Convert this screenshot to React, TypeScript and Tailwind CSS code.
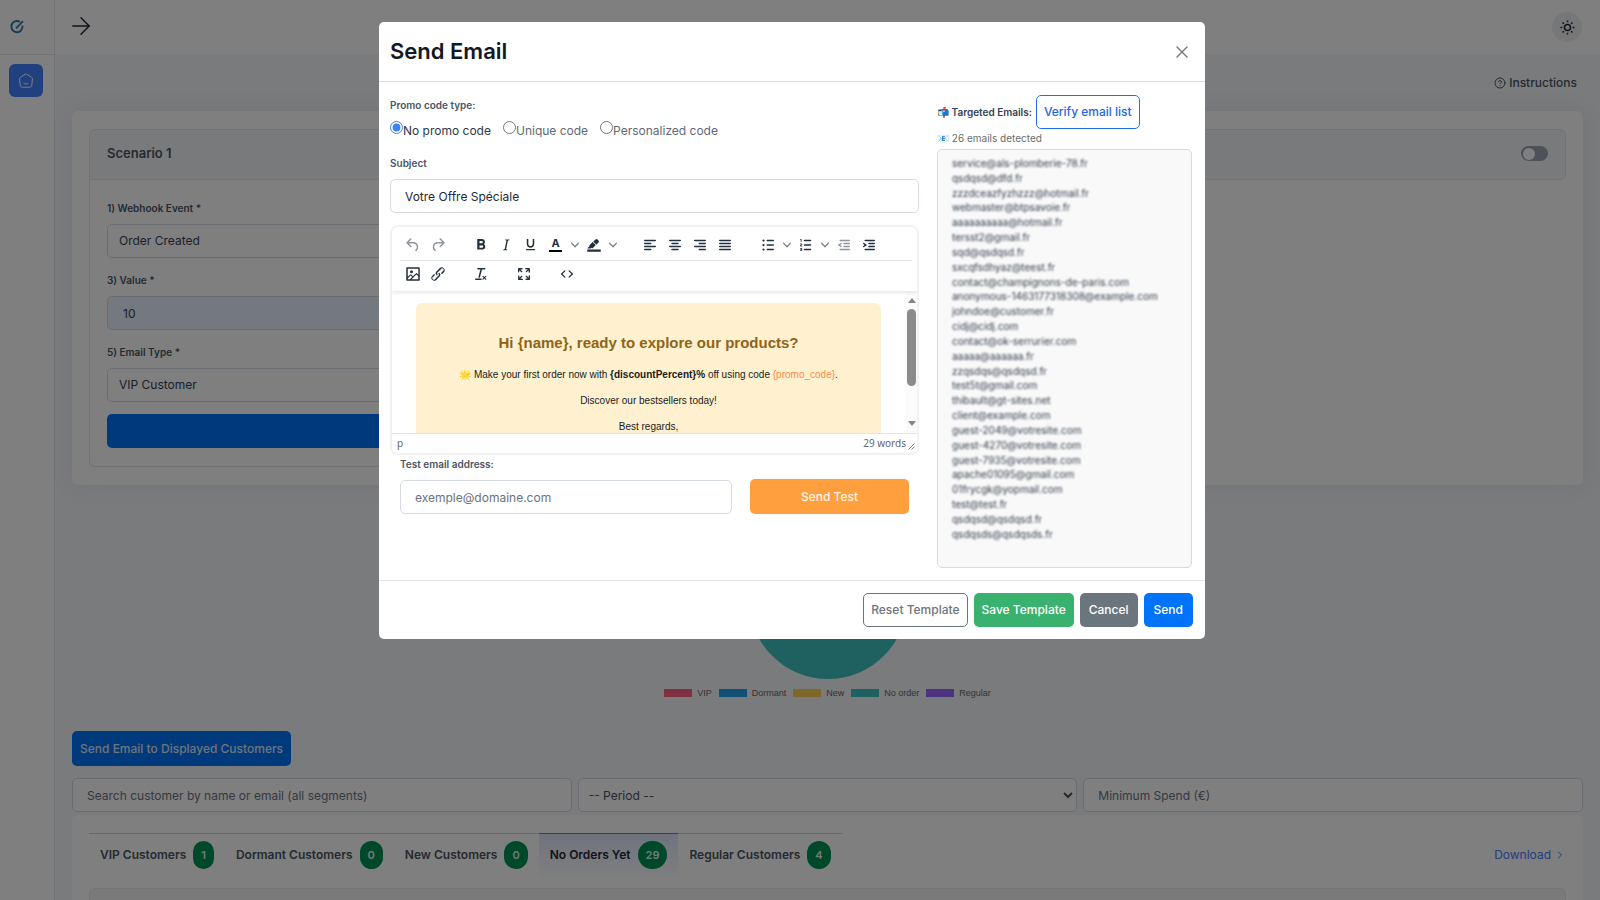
import { useState } from "react";
import type { ReactNode } from "react";
import { ArrowRight, CircleHelp, ChevronRight } from "lucide-react";
import { MdFormatBold, MdFormatUnderlined } from "react-icons/md";

const emails = [
  "service@als-plomberie-78.fr",
  "qsdqsd@dfd.fr",
  "zzzdceazfyzhzzz@hotmail.fr",
  "webmaster@btpsavoie.fr",
  "aaaaaaaaaa@hotmail.fr",
  "tersst2@gmail.fr",
  "sqd@qsdqsd.fr",
  "sxcqfsdhyaz@teest.fr",
  "contact@champignons-de-paris.com",
  "anonymous-1463177318308@example.com",
  "johndoe@customer.fr",
  "cidj@cidj.com",
  "contact@ok-serrurier.com",
  "aaaaa@aaaaaa.fr",
  "zzqsdqs@qsdqsd.fr",
  "test5t@gmail.com",
  "thibault@gt-sites.net",
  "client@example.com",
  "guest-2049@votresite.com",
  "guest-4270@votresite.com",
  "guest-7935@votresite.com",
  "apache01095@gmail.com",
  "01frycgk@yopmail.com",
  "test@test.fr",
  "qsdqsd@qsdqsd.fr",
  "qsdqsds@qsdqsds.fr",
];

const legend = [
  { label: "VIP", color: "bg-[#ff6384]" },
  { label: "Dormant", color: "bg-[#22a0e8]" },
  { label: "New", color: "bg-[#ffcd56]" },
  { label: "No order", color: "bg-[#3cc3c0]" },
  { label: "Regular", color: "bg-[#9966ff]" },
];

const tabs = [
  { label: "VIP Customers", count: 1 },
  { label: "Dormant Customers", count: 0 },
  { label: "New Customers", count: 0 },
  { label: "No Orders Yet", count: 29 },
  { label: "Regular Customers", count: 4 },
];

const promoTypes = ["No promo code", "Unique code", "Personalized code"];

const icons = {
  undo: "M6.4 8H12c3.7 0 6.2 2 6.8 5.1.6 2.7-.4 5.6-2.3 6.8a1 1 0 0 1-1-1.8c1.1-.6 1.8-2.7 1.4-4.6-.5-2.1-2.1-3.5-4.9-3.5H6.4l3.3 3.3a1 1 0 1 1-1.4 1.4l-5-5a1 1 0 0 1 0-1.4l5-5a1 1 0 0 1 1.4 1.4L6.4 8Z",
  redo: "M17.6 10H12c-2.8 0-4.4 1.4-4.9 3.5-.4 2 .3 4 1.4 4.6a1 1 0 1 1-1 1.8c-2-1.2-2.9-4.1-2.3-6.8.6-3 3-5.1 6.8-5.1h5.6l-3.3-3.3a1 1 0 1 1 1.4-1.4l5 5a1 1 0 0 1 0 1.4l-5 5a1 1 0 0 1-1.4-1.4l3.3-3.3Z",
  italic: "m16.7 4.7-.1.9h-.3c-.6 0-1 0-1.4.3-.3.3-.4.6-.5 1.1l-2.1 9.8v.6c0 .5.4.8 1.4.8h.2l-.2.8H8l.2-.8h.2c1.1 0 1.8-.5 2-1.5l2-9.8.1-.5c0-.6-.4-.8-1.4-.8h-.3l.2-.9h5.8Z",
  marker: "M3 18h18v3H3zM7.7 16.7H3l3.3-3.3-.7-.8L10.2 8l4 4.1-4 4.2c-.2.2-.6.2-.8 0l-.6-.7-1.1 1.1zm5-7.5L11 7.4l3-2.9a2 2 0 0 1 2.6 0L18 6c.7.7.7 2 0 2.7l-2.9 2.9-1.8-1.8-.5-.6",
  left: "M5 5h14a1 1 0 0 1 0 2H5a1 1 0 0 1 0-2Zm0 4h8a1 1 0 0 1 0 2H5a1 1 0 0 1 0-2Zm0 8h8a1 1 0 0 1 0 2H5a1 1 0 0 1 0-2Zm0-4h14a1 1 0 0 1 0 2H5a1 1 0 0 1 0-2Z",
  center: "M5 5h14a1 1 0 0 1 0 2H5a1 1 0 0 1 0-2Zm3 4h8a1 1 0 0 1 0 2H8a1 1 0 0 1 0-2Zm0 8h8a1 1 0 0 1 0 2H8a1 1 0 0 1 0-2Zm-3-4h14a1 1 0 0 1 0 2H5a1 1 0 0 1 0-2Z",
  right: "M5 5h14a1 1 0 0 1 0 2H5a1 1 0 0 1 0-2Zm6 4h8a1 1 0 0 1 0 2h-8a1 1 0 0 1 0-2Zm0 8h8a1 1 0 0 1 0 2h-8a1 1 0 0 1 0-2Zm-6-4h14a1 1 0 0 1 0 2H5a1 1 0 0 1 0-2Z",
  justify: "M5 5h14a1 1 0 0 1 0 2H5a1 1 0 0 1 0-2Zm0 4h14a1 1 0 0 1 0 2H5a1 1 0 0 1 0-2Zm0 4h14a1 1 0 0 1 0 2H5a1 1 0 0 1 0-2Zm0 4h14a1 1 0 0 1 0 2H5a1 1 0 0 1 0-2Z",
  bullets: "M11 5h8a1 1 0 0 1 0 2h-8a1 1 0 0 1 0-2Zm0 6h8a1 1 0 0 1 0 2h-8a1 1 0 0 1 0-2Zm0 6h8a1 1 0 0 1 0 2h-8a1 1 0 0 1 0-2ZM4.5 6a1.5 1.5 0 1 1 3 0 1.5 1.5 0 0 1-3 0Zm0 6a1.5 1.5 0 1 1 3 0 1.5 1.5 0 0 1-3 0Zm0 6a1.5 1.5 0 1 1 3 0 1.5 1.5 0 0 1-3 0Z",
  numbers: "M10 17h8a1 1 0 0 1 0 2h-8a1 1 0 0 1 0-2Zm0-6h8a1 1 0 0 1 0 2h-8a1 1 0 0 1 0-2Zm0-6h8a1 1 0 1 1 0 2h-8a1 1 0 1 1 0-2ZM6 4v3.5c0 .3-.2.5-.5.5a.5.5 0 0 1-.5-.5V5h-.5a.5.5 0 0 1 0-1H6Zm-1 8.8.2.2h1.3c.3 0 .5.2.5.5s-.2.5-.5.5H4.9a1 1 0 0 1-.9-1V13c0-.4.3-.8.6-1l1.2-.4.2-.3a.2.2 0 0 0-.2-.2H4.5a.5.5 0 0 1-.5-.5c0-.3.2-.5.5-.5h1.6c.5 0 .9.4.9 1v.1c0 .4-.3.8-.6 1l-1.2.4-.2.3ZM7 17v2c0 .6-.4 1-1 1H4.5a.5.5 0 0 1 0-1h1.2c.2 0 .3-.1.3-.3 0-.2-.1-.3-.3-.3H4.4a.4.4 0 1 1 0-.8h1.3c.2 0 .3-.1.3-.3 0-.2-.1-.3-.3-.3H4.5a.5.5 0 1 1 0-1H6c.6 0 1 .4 1 1Z",
  outdent: "M7 5h12a1 1 0 0 1 0 2H7a1 1 0 1 1 0-2Zm5 4h7a1 1 0 0 1 0 2h-7a1 1 0 0 1 0-2Zm0 4h7a1 1 0 0 1 0 2h-7a1 1 0 0 1 0-2Zm-5 4h12a1 1 0 0 1 0 2H7a1 1 0 0 1 0-2Zm1.6-3.8a1 1 0 0 1-1.2 1.6l-3-2a1 1 0 0 1 0-1.6l3-2a1 1 0 0 1 1.2 1.6L6.8 12l1.8 1.2Z",
  indent: "M7 5h12a1 1 0 0 1 0 2H7a1 1 0 1 1 0-2Zm5 4h7a1 1 0 0 1 0 2h-7a1 1 0 0 1 0-2Zm0 4h7a1 1 0 0 1 0 2h-7a1 1 0 0 1 0-2Zm-5 4h12a1 1 0 0 1 0 2H7a1 1 0 0 1 0-2Zm-2.600-3.800L6.200 12l-1.800-1.200a1 1 0 0 1 1.200-1.600l3 2a1 1 0 0 1 0 1.600l-3 2a1 1 0 1 1-1.200-1.600Z",
  image: "m5 15.7 3.3-3.2c.3-.3.7-.3 1 0L12 15l4.1-4c.3-.4.8-.4 1 0l2 1.9V5H5v10.7ZM5 18V19h3l2.8-2.9-2-2L5 17.9Zm14-3-2.5-2.4-6.4 6.5H19v-4ZM4 3h16c.6 0 1 .4 1 1v16c0 .6-.4 1-1 1H4a1 1 0 0 1-1-1V4c0-.6.4-1 1-1Zm6 8a2 2 0 1 0 0-4 2 2 0 0 0 0 4Z",
  link: "M6.2 12.3a1 1 0 0 1 1.4 1.4l-2 2a2 2 0 1 0 2.6 2.8l4.8-4.8a1 1 0 0 0 0-1.4 1 1 0 1 1 1.4-1.3 2.9 2.9 0 0 1 0 4L9.6 20a3.9 3.9 0 0 1-5.5-5.5l2-2Zm11.6-.6a1 1 0 0 1-1.4-1.4l2-2a2 2 0 1 0-2.6-2.8L11 10.3a1 1 0 0 0 0 1.4A1 1 0 1 1 9.6 13a2.9 2.9 0 0 1 0-4L14.4 4a3.9 3.9 0 0 1 5.5 5.5l-2 2Z",
  clear: "M13.2 6a1 1 0 0 1 0 .2l-2.6 10a1 1 0 0 1-1 .8h-.2a.8.8 0 0 1-.8-1l2.6-10H8a1 1 0 1 1 0-2h9a1 1 0 0 1 0 2h-3.8ZM5 18h7a1 1 0 0 1 0 2H5a1 1 0 0 1 0-2Zm13 1.5L16.5 18 15 19.5a.7.7 0 0 1-1-1l1.5-1.5-1.5-1.5a.7.7 0 0 1 1-1l1.5 1.5 1.5-1.5a.7.7 0 0 1 1 1L17.5 17l1.5 1.5a.7.7 0 0 1-1 1Z",
  fullscreen: "m15.3 10-1.2-1.3 2.9-3h-2.3a.9.9 0 1 1 0-1.7H19c.5 0 .9.4.9.9v4.4a.9.9 0 1 1-1.8 0V7l-2.9 3Zm0 4 3 3v-2.3a.9.9 0 1 1 1.7 0V19c0 .5-.4.9-.9.9h-4.4a.9.9 0 1 1 0-1.8H17l-3-2.9 1.3-1.2ZM10 15.4l-2.9 3h2.3a.9.9 0 1 1 0 1.7H5a.9.9 0 0 1-.9-.9v-4.4a.9.9 0 1 1 1.8 0V17l2.9-3 1.2 1.3ZM8.7 10 5.7 7v2.3a.9.9 0 0 1-1.7 0V5c0-.5.4-.9.9-.9h4.4a.9.9 0 0 1 0 1.8H7l3 2.9-1.3 1.2Z",
  code: "M9.8 15.7c.3.3.3.8 0 1-.3.4-.9.4-1.2 0l-4.4-4.1a.8.8 0 0 1 0-1.2l4.4-4.2c.3-.3.9-.3 1.2 0 .3.3.3.8 0 1.1L6 12l3.8 3.7ZM14.2 15.7c-.3.3-.3.8 0 1 .4.4.9.4 1.2 0l4.4-4.1c.3-.3.3-.8 0-1.2l-4.4-4.2a.8.8 0 0 0-1.2 0c-.3.3-.3.8 0 1.1L18 12l-3.8 3.7Z",
};

type IconName = keyof typeof icons;

function Icon({ name }: { name: IconName }) {
  return (
    <svg viewBox="0 0 24 24" className="h-[18px] w-[18px]" fill="currentColor" fillRule="evenodd">
      <path d={icons[name]} />
    </svg>
  );
}

function Tool({ label, disabled, children }: { label: string; disabled?: boolean; children: ReactNode }) {
  return (
    <button
      type="button"
      aria-label={label}
      disabled={disabled}
      className="flex h-6 w-[25px] items-center justify-center text-[#222f3e] disabled:opacity-50"
    >
      {children}
    </button>
  );
}

function Caret({ label }: { label: string }) {
  return (
    <button type="button" aria-label={label} className="flex h-6 w-[13px] items-center justify-center text-[#222f3e]/60">
      <svg viewBox="0 0 10 10" className="h-2 w-2" fill="currentColor">
        <path d="M8.7 2.2c.3-.3.8-.3 1 0 .4.4.4.9 0 1.2L5.7 7.8c-.3.3-.9.3-1.2 0L.2 3.4a.8.8 0 0 1 0-1.2c.3-.3.8-.3 1.1 0L5 6l3.7-3.8Z" />
      </svg>
    </button>
  );
}

function Sidebar() {
  return (
    <aside className="w-[55px] shrink-0 border-r border-[#e6e9ee] bg-white">
      <div className="flex h-[55px] items-center border-b border-[#e3e6ea] pl-[9px]">
        <svg viewBox="0 0 16 16" className="h-4 w-4" fill="none" stroke="#2d7aa6" strokeWidth="2">
          <path d="M10.8 2.8A5.6 5.6 0 1 0 13.4 6.6" />
          <path d="M7 9.4 14 2.2" strokeWidth="1.8" />
        </svg>
      </div>
      <nav className="pt-[9px] pl-[9px]">
        <a href="#home" aria-label="Home" className="flex h-[33px] w-[34px] items-center justify-center rounded-md bg-[#4180ff] text-white">
          <svg viewBox="0 0 16 16" className="h-4 w-4" fill="none" stroke="currentColor" strokeWidth="1" strokeLinecap="round">
            <path d="M6.7 1.5 2.6 4.2c-.7.5-1 1-1 1.8l.6 6.2c.1 1.3.9 2 2.2 2h7.2c1.3 0 2.1-.7 2.2-2l.6-6.2c0-.8-.3-1.3-1-1.8L9.3 1.5c-.8-.5-1.8-.5-2.6 0Z" />
            <path d="M6 10.5c1.2.7 2.8.7 4 0" />
          </svg>
        </a>
      </nav>
    </aside>
  );
}

function Topbar() {
  return (
    <header className="flex h-[54px] shrink-0 items-center justify-between bg-white pr-[18px] pl-3">
      <button type="button" aria-label="Toggle menu" className="pb-[2px] text-[#1f2937]">
        <ArrowRight className="h-7 w-7" strokeWidth={1.3} />
      </button>
      <button type="button" aria-label="Theme" className="flex h-[30px] w-[30px] items-center justify-center rounded-full bg-[#eceef1] text-[#1f2937]">
        <svg viewBox="0 0 16 16" className="h-[15px] w-[15px]" fill="none" stroke="currentColor" strokeWidth="1.6">
          <circle cx="8" cy="8" r="3.2" />
          <path d="M8 .5v2M8 13.5v2M.5 8h2M13.5 8h2M2.7 2.7l1.4 1.4M11.9 11.9l1.4 1.4M2.7 13.3l1.4-1.4M11.9 4.1l1.4-1.4" />
        </svg>
      </button>
    </header>
  );
}

function Scenario() {
  return (
    <section className="mt-[18px] rounded-md bg-white px-[17px] py-[18px] shadow-[0_0_24px_rgba(80,70,110,0.08)]">
      <div className="flex h-[51px] items-center justify-between rounded-t-md rounded-br-md border border-[#e2e6eb] bg-[#f1f4f7] px-[17px] pb-[2px]">
        <h2 className="text-[13px] font-semibold text-[#4b5563]">Scenario 1</h2>
        <label className="flex">
          <input type="checkbox" aria-label="Enable scenario 1" className="peer sr-only" />
          <span className="flex h-[15px] w-[27px] items-center rounded-full bg-[#9ea3b4] px-[2px]">
            <span className="h-3 w-3 rounded-full bg-white" />
          </span>
        </label>
      </div>
      <div className="w-1/2 rounded-b-md border border-t-0 border-[#e2e6eb] px-[17px] pt-5 pb-[18px]">
        <label htmlFor="event" className="mb-2 block text-[10px] leading-4 font-semibold text-[#4b5563]">1) Webhook Event *</label>
        <select id="event" className="mb-[14px] h-[34px] w-full appearance-none rounded-[5px] border border-[#d3d7e0] bg-white px-[11px] text-[12px] text-[#374151]">
          <option>Order Created</option>
        </select>
        <label htmlFor="value" className="mb-2 block text-[10px] leading-4 font-semibold text-[#4b5563]">3) Value *</label>
        <input id="value" defaultValue="10" className="mb-[14px] h-[34px] w-full rounded-[5px] border border-[#d3d7e0] bg-[#e8f0fe] px-[15px] text-[12px] text-[#374151]" />
        <label htmlFor="type" className="mb-2 block text-[10px] leading-4 font-semibold text-[#4b5563]">5) Email Type *</label>
        <select id="type" className="mb-3 h-[34px] w-full appearance-none rounded-[5px] border border-[#d3d7e0] bg-white px-[11px] text-[12px] text-[#374151]">
          <option>VIP Customer</option>
        </select>
        <button type="button" aria-label="Save scenario" className="block h-[34px] w-full rounded-[5px] bg-[#0073f9]" />
      </div>
    </section>
  );
}

function Chart() {
  return (
    <section className="flex flex-col items-center pt-9">
      <svg viewBox="0 0 158 158" className="h-[158px] w-[158px]">
        <circle cx="79" cy="79" r="79" fill="#3cc3c0" />
      </svg>
      <ul className="mt-2 flex gap-[7px] font-['Liberation_Sans',sans-serif] text-[9px] leading-3 text-[#666666]">
        {legend.map((item) => (
          <li key={item.label} className="flex items-center gap-[5px]">
            <span className={`h-2 w-7 ${item.color}`} />
            {item.label}
          </li>
        ))}
      </ul>
    </section>
  );
}

function Customers() {
  return (
    <>
      <button type="button" className="mt-8 h-[35px] self-start rounded-[5px] bg-[#0073f9] px-2 text-[12px] font-medium text-[#dfe8f6]">
        Send Email to Displayed Customers
      </button>
      <div className="mt-3 grid grid-cols-3 gap-[6px]">
        <input aria-label="Search customer" placeholder="Search customer by name or email (all segments)" className="h-[34px] min-w-0 rounded-[5px] border border-[#d3d7e0] bg-white px-[14px] text-[12px] placeholder:text-[#6b7280]" />
        <select aria-label="Period" className="h-[34px] min-w-0 rounded-[5px] border border-[#d3d7e0] bg-white pl-[6px] text-[12px] text-[#4b5563]">
          <option>-- Period --</option>
        </select>
        <input aria-label="Minimum Spend" placeholder="Minimum Spend (€)" className="h-[34px] min-w-0 rounded-[5px] border border-[#d3d7e0] bg-white px-[14px] text-[12px] placeholder:text-[#6b7280]" />
      </div>
      <section className="mt-[3px] rounded-t-md bg-white px-[17px] pt-[18px]">
        <div className="flex items-center justify-between">
          <div role="tablist" className="flex">
            {tabs.map((tab) => {
              const active = tab.label === "No Orders Yet";
              return (
                <button
                  key={tab.label}
                  type="button"
                  role="tab"
                  aria-selected={active}
                  className={`flex h-[43px] items-center gap-[7px] border-t px-[11px] text-[12px] font-semibold ${
                    active
                      ? "border-[#4180ff] bg-gradient-to-b from-[#dfe8fb] to-[#fbfcff] text-[#1f2937]"
                      : "border-[#c9cdd6] text-[#4b5563]"
                  }`}
                >
                  {tab.label}
                  <span className="flex h-7 items-center rounded-full bg-[#009055] px-2 text-[11px] text-[#e6f2ec]">{tab.count}</span>
                </button>
              );
            })}
          </div>
          <a href="#download" className="flex items-center gap-[3px] text-[12px] text-[#4180ff]">
            Download
            <ChevronRight className="h-3 w-3" />
          </a>
        </div>
        <div className="mt-3 h-8 rounded-t-md border border-[#e6e8ec] bg-[#f4f5f7]" />
      </section>
    </>
  );
}

function Editor() {
  return (
    <div className="mt-3 overflow-hidden rounded-lg border-2 border-[#f1f2f4] bg-white">
      <div className="relative pr-[5px] pl-2 shadow-[0_2px_3px_rgba(34,47,62,0.10)]">
        <div className="flex h-[34px] items-center gap-[18px] border-b border-[#e3e4e6] pt-[2px]">
          <div className="flex">
            <Tool label="Undo" disabled><Icon name="undo" /></Tool>
            <Tool label="Redo" disabled><Icon name="redo" /></Tool>
          </div>
          <div className="flex">
            <Tool label="Bold"><MdFormatBold className="h-[18px] w-[18px]" /></Tool>
            <Tool label="Italic"><Icon name="italic" /></Tool>
            <Tool label="Underline"><MdFormatUnderlined className="h-[15px] w-[15px]" /></Tool>
            <Tool label="Text color">
              <span className="flex flex-col items-center">
                <span className="text-[11px] leading-[10px] font-bold">A</span>
                <span className="mt-[2px] h-[2px] w-[13px] bg-black" />
              </span>
            </Tool>
            <Caret label="Text color menu" />
            <Tool label="Background color"><Icon name="marker" /></Tool>
            <Caret label="Background color menu" />
          </div>
          <div className="flex">
            <Tool label="Align left"><Icon name="left" /></Tool>
            <Tool label="Align center"><Icon name="center" /></Tool>
            <Tool label="Align right"><Icon name="right" /></Tool>
            <Tool label="Justify"><Icon name="justify" /></Tool>
          </div>
          <div className="flex">
            <Tool label="Bullet list"><Icon name="bullets" /></Tool>
            <Caret label="Bullet list menu" />
            <Tool label="Numbered list"><Icon name="numbers" /></Tool>
            <Caret label="Numbered list menu" />
            <Tool label="Decrease indent" disabled><Icon name="outdent" /></Tool>
            <Tool label="Increase indent"><Icon name="indent" /></Tool>
          </div>
        </div>
        <div className="flex h-[30px] items-center gap-[18px] pb-[5px]">
          <div className="flex">
            <Tool label="Insert image"><Icon name="image" /></Tool>
            <Tool label="Insert link"><Icon name="link" /></Tool>
          </div>
          <Tool label="Clear formatting"><Icon name="clear" /></Tool>
          <Tool label="Fullscreen"><Icon name="fullscreen" /></Tool>
          <Tool label="Source code"><Icon name="code" /></Tool>
        </div>
      </div>

      {/* Message body */}
      <div className="flex h-[142px] overflow-hidden font-['Liberation_Sans',sans-serif]">
        <div className="min-w-0 flex-1 pt-3 pr-[25px] pl-6">
          <div className="h-[200px] rounded-md bg-[#fff1cf] pt-[30px] text-center text-[10px] leading-4 text-[#1a1a1a]">
            <h3 className="text-[15px] leading-5 font-bold text-[#8f6418]">Hi {"{name}"}, ready to explore our products?</h3>
            <p className="mt-[14px]">
              🌟 Make your first order now with <b>{"{discountPercent}%"}</b> off using code{" "}
              <span className="text-[#ff8a4c]">{"{promo_code}"}</span>.
            </p>
            <p className="mt-[10px]">Discover our bestsellers today!</p>
            <p className="mt-[10px]">Best regards,</p>
          </div>
        </div>
        <div className="flex w-[11px] flex-col items-center bg-[#fbfbfb] py-[7px]">
          <span className="border-x-4 border-b-[5px] border-x-transparent border-b-[#858585]" />
          <span className="mt-[6px] h-[77px] w-[9px] rounded-full bg-[#8b8b8b]" />
          <span className="mt-auto border-x-4 border-t-[5px] border-x-transparent border-t-[#858585]" />
        </div>
      </div>
      <div className="flex h-5 items-center justify-between border-t border-[#e3e4e6] pr-[2px] pl-[5px] font-['Noto_Sans',sans-serif] text-[10px] text-[#5f6873]">
        <span>p</span>
        <span className="flex items-center gap-[2px]">
          29 words
          <svg viewBox="0 0 8 8" className="mt-[6px] h-[7px] w-[7px]" stroke="currentColor" strokeWidth="1">
            <path d="M.5 7.5l7-7M4 7.5l3.5-3.5" />
          </svg>
        </span>
      </div>
    </div>
  );
}

function SendEmailModal() {
  const [promo, setPromo] = useState(promoTypes[0]);
  const [subject, setSubject] = useState("Votre Offre Spéciale");
  const [testEmail, setTestEmail] = useState("");

  return (
    <div className="fixed inset-0 z-50 overflow-hidden bg-black/50 pt-[22px] pr-4">
      <div role="dialog" aria-modal="true" aria-labelledby="modal-title" className="mx-auto w-full max-w-[826px] rounded-[5px] bg-white">
        <div className="flex h-[60px] items-center justify-between border-b border-[#d9dde3] pr-[17px] pl-[11px]">
          <h1 id="modal-title" className="pb-px text-[22px] leading-7 font-semibold text-[#111827]">Send Email</h1>
          <button type="button" aria-label="Close" className="text-[#7d7d7d]">
            <svg viewBox="0 0 12 12" className="h-3 w-3" stroke="currentColor" strokeWidth="1.5" strokeLinecap="round">
              <path d="M1 1l10 10M11 1L1 11" />
            </svg>
          </button>
        </div>

        <div className="flex gap-[18px] pt-3 pr-[13px] pb-3 pl-[11px]">
          <div className="min-w-0 flex-1">
            <fieldset>
              <legend className="pt-[3px] text-[10px] leading-4 font-semibold text-[#4b5563]">Promo code type:</legend>
              <div className="mt-2 flex gap-3">
                {promoTypes.map((type) => (
                  <label key={type} className={`flex items-start text-[12px] leading-5 ${promo === type ? "text-[#2d3748]" : "text-[#5f6875]"}`}>
                    <input type="radio" name="promo" checked={promo === type} onChange={() => setPromo(type)} className="h-[13px] w-[13px] accent-[#3b82ff]" />
                    {type}
                  </label>
                ))}
              </div>
            </fieldset>

            <label htmlFor="subject" className="mt-[14px] block text-[10px] leading-4 font-semibold text-[#4b5563]">Subject</label>
            <input id="subject" value={subject} onChange={(e) => setSubject(e.target.value)} className="mt-2 block h-[34px] w-full rounded-[5px] border border-[#d6dae2] px-[14px] text-[12px] text-[#1f2937]" />

            <Editor />

            <div className="flex items-end gap-[18px] px-[10px] pt-px">
              <div className="min-w-0 flex-1">
                <label htmlFor="test" className="block text-[10px] leading-4 font-semibold text-[#4b5563]">Test email address:</label>
                <input id="test" type="email" value={testEmail} onChange={(e) => setTestEmail(e.target.value)} placeholder="exemple@domaine.com" className="mt-2 block h-[34px] w-full rounded-[5px] border border-[#d6dae2] px-[14px] text-[12px] placeholder:text-[#6b7280]" />
              </div>
              <button type="button" className="h-[35px] w-[159px] rounded-[5px] bg-[#ff9f3d] text-[12px] font-medium text-[#fff6ea]">Send Test</button>
            </div>
          </div>

          <div className="w-[255px] shrink-0">
            <div className="flex items-center gap-1 pt-px">
              <span className="text-[10px] font-semibold text-[#374151]">📬 Targeted Emails:</span>
              <button type="button" className="h-[34px] rounded-[5px] border border-[#1f6feb] px-[7px] text-[12px] font-medium text-[#1d66e5]">Verify email list</button>
            </div>
            <p className="mt-[2px] text-[10px] leading-[14px] text-[#6b6b6b]">📧 26 emails detected</p>
            <ul className="mt-1 flex h-[419px] flex-col justify-between rounded-[5px] border border-[#d6dae2] bg-[#f9f9f9] px-[14px] pt-[6px] pb-[26px] text-[10px] leading-[14px] text-[#2f3a48]">
              {emails.map((email) => (
                <li key={email} className="blur-[1px]">{email}</li>
              ))}
            </ul>
          </div>
        </div>

        <div className="flex justify-end gap-[6px] border-t border-[#dfe2e7] p-3 text-[12px] font-medium">
          <button type="button" className="h-[34px] rounded-[5px] border border-[#6c757d] px-[7px] text-[#6c757d]">Reset Template</button>
          <button type="button" className="h-[34px] rounded-[5px] bg-[#38b26e] px-2 text-white">Save Template</button>
          <button type="button" className="h-[34px] rounded-[5px] bg-[#6b757e] px-[9px] text-white">Cancel</button>
          <button type="button" className="h-[34px] rounded-[5px] bg-[#0073f9] px-[10px] text-white">Send</button>
        </div>
      </div>
    </div>
  );
}

export default function App() {
  return (
    <div className="flex h-screen overflow-hidden bg-[#f4f6fa] font-['Inter',sans-serif]">
      <Sidebar />
      <div className="flex min-w-0 flex-1 flex-col">
        <Topbar />
        <main className="flex shrink-0 flex-col pr-[17px] pl-[17px]">
          <a href="#instructions" className="mt-[19px] mr-[6px] flex items-center gap-[3px] self-end text-[12px] leading-5 font-medium text-[#4b5563]">
            <CircleHelp className="h-3 w-3" />
            Instructions
          </a>
          <Scenario />
          <Chart />
          <Customers />
        </main>
      </div>
      <SendEmailModal />
    </div>
  );
}
